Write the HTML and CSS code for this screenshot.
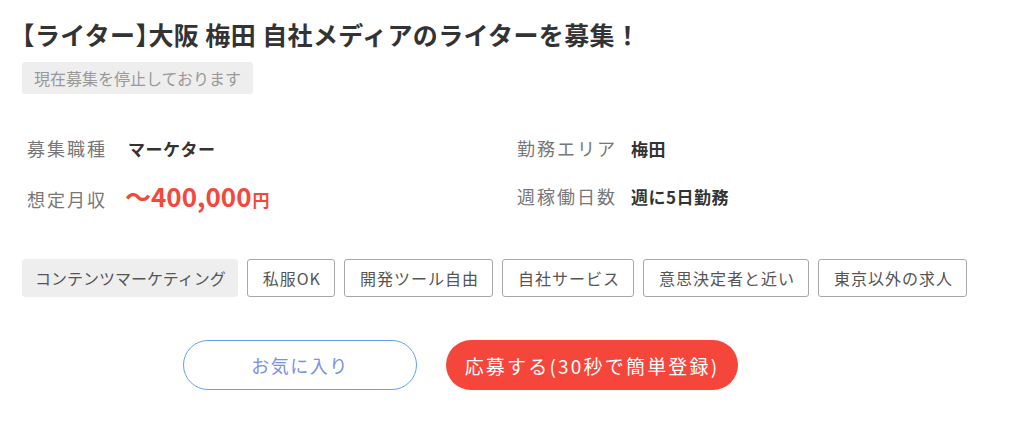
FILE: index.html
```html
<!DOCTYPE html>
<html lang="ja">
<head>
<meta charset="utf-8">
<title>求人</title>
<link rel="stylesheet" href="styles.css">
</head>
<body>
<div class="page">
  <h1 class="title"><span class="bracket">【</span>ライター<span class="bracket">】</span>大阪 梅田 自社メディアのライターを募集！</h1>
  <div class="status"><span class="status-badge">現在募集を停止しております</span></div>

  <div class="info">
    <div class="info-item">
      <span class="info-label">募集職種</span>
      <span class="info-value">マーケター</span>
    </div>
    <div class="info-item">
      <span class="info-label">勤務エリア</span>
      <span class="info-value">梅田</span>
    </div>
    <div class="info-item">
      <span class="info-label">想定月収</span>
      <span class="info-salary">〜400,000<span class="yen">円</span></span>
    </div>
    <div class="info-item">
      <span class="info-label">週稼働日数</span>
      <span class="info-value">週に5日勤務</span>
    </div>
  </div>

  <ul class="tags">
    <li class="tag tag-main">コンテンツマーケティング</li>
    <li class="tag">私服OK</li>
    <li class="tag">開発ツール自由</li>
    <li class="tag">自社サービス</li>
    <li class="tag">意思決定者と近い</li>
    <li class="tag">東京以外の求人</li>
  </ul>

  <div class="actions">
    <button class="btn btn-fav" type="button">お気に入り</button>
    <button class="btn btn-apply" type="button">応募する(30秒で簡単登録)</button>
  </div>
</div>
</body>
</html>
```

FILE: styles.css
```css
* { box-sizing: border-box; }

html, body {
  margin: 0;
  padding: 0;
  background: #ffffff;
}

body {
  font-family: "Noto Sans CJK JP", "Noto Sans", sans-serif;
  color: #333333;
}

.page {
  width: 1024px;
  padding: 16px 22px 0 22px;
}

.title {
  margin: 0;
  font-size: 25px;
  line-height: 37px;
  font-weight: 700;
  color: #333333;
  letter-spacing: 0.4px;
}

.bracket {
  font-feature-settings: "halt";
}

.status {
  margin-top: 9px;
  display: flex;
}

.status-badge {
  display: inline-block;
  height: 32px;
  line-height: 32px;
  padding: 0 12px;
  background: #eeeeee;
  border-radius: 3px;
  font-size: 16px;
  letter-spacing: 0;
  color: #999999;
}

.info {
  margin-top: 30px;
  display: grid;
  grid-template-columns: 1fr 1fr;
  width: 980px;
}

.info-item {
  display: flex;
  align-items: baseline;
  height: 48px;
  line-height: 48px;
  padding-left: 5px;
}

.info-label {
  min-width: 87px;
  margin-right: 14px;
  font-size: 18px;
  letter-spacing: 2px;
  color: #777777;
}

.info-value {
  font-size: 17px;
  font-weight: 700;
  color: #333333;
  letter-spacing: 0.5px;
}

.info-value-wide {
  margin-left: 4px;
}

.info-salary {
  font-size: 26px;
  font-weight: 700;
  color: #f5473b;
  margin-left: -3px;
}

.yen {
  font-size: 17px;
  font-weight: 700;
  margin-left: 1px;
}

.tags {
  list-style: none;
  margin: 39px 0 0 0;
  padding: 0;
  display: flex;
  gap: 9px;
}

.tag {
  height: 38px;
  line-height: 36px;
  padding: 0 13px 0 15px;
  border: 1px solid #a8a8a8;
  border-radius: 3px;
  font-size: 16px;
  letter-spacing: 1px;
  color: #555555;
  background: #ffffff;
}

.tag-main {
  background: #eeeeee;
  border-color: #eeeeee;
  padding: 0 11px 0 12px;
  letter-spacing: 0;
}

.actions {
  margin-top: 43px;
  display: flex;
  gap: 29px;
  padding-left: 161px;
}

.btn {
  font-family: inherit;
  height: 50px;
  border-radius: 25px;
  font-size: 18px;
  cursor: pointer;
  padding: 0;
}

.btn-fav {
  width: 234px;
  background: #ffffff;
  border: 1.5px solid #62a0f6;
  color: #7a90e6;
  letter-spacing: 1.5px;
}

.btn-apply {
  width: 292px;
  background: #f4463a;
  border: none;
  color: #ffffff;
  font-size: 19px;
  letter-spacing: 2.2px;
}
```
